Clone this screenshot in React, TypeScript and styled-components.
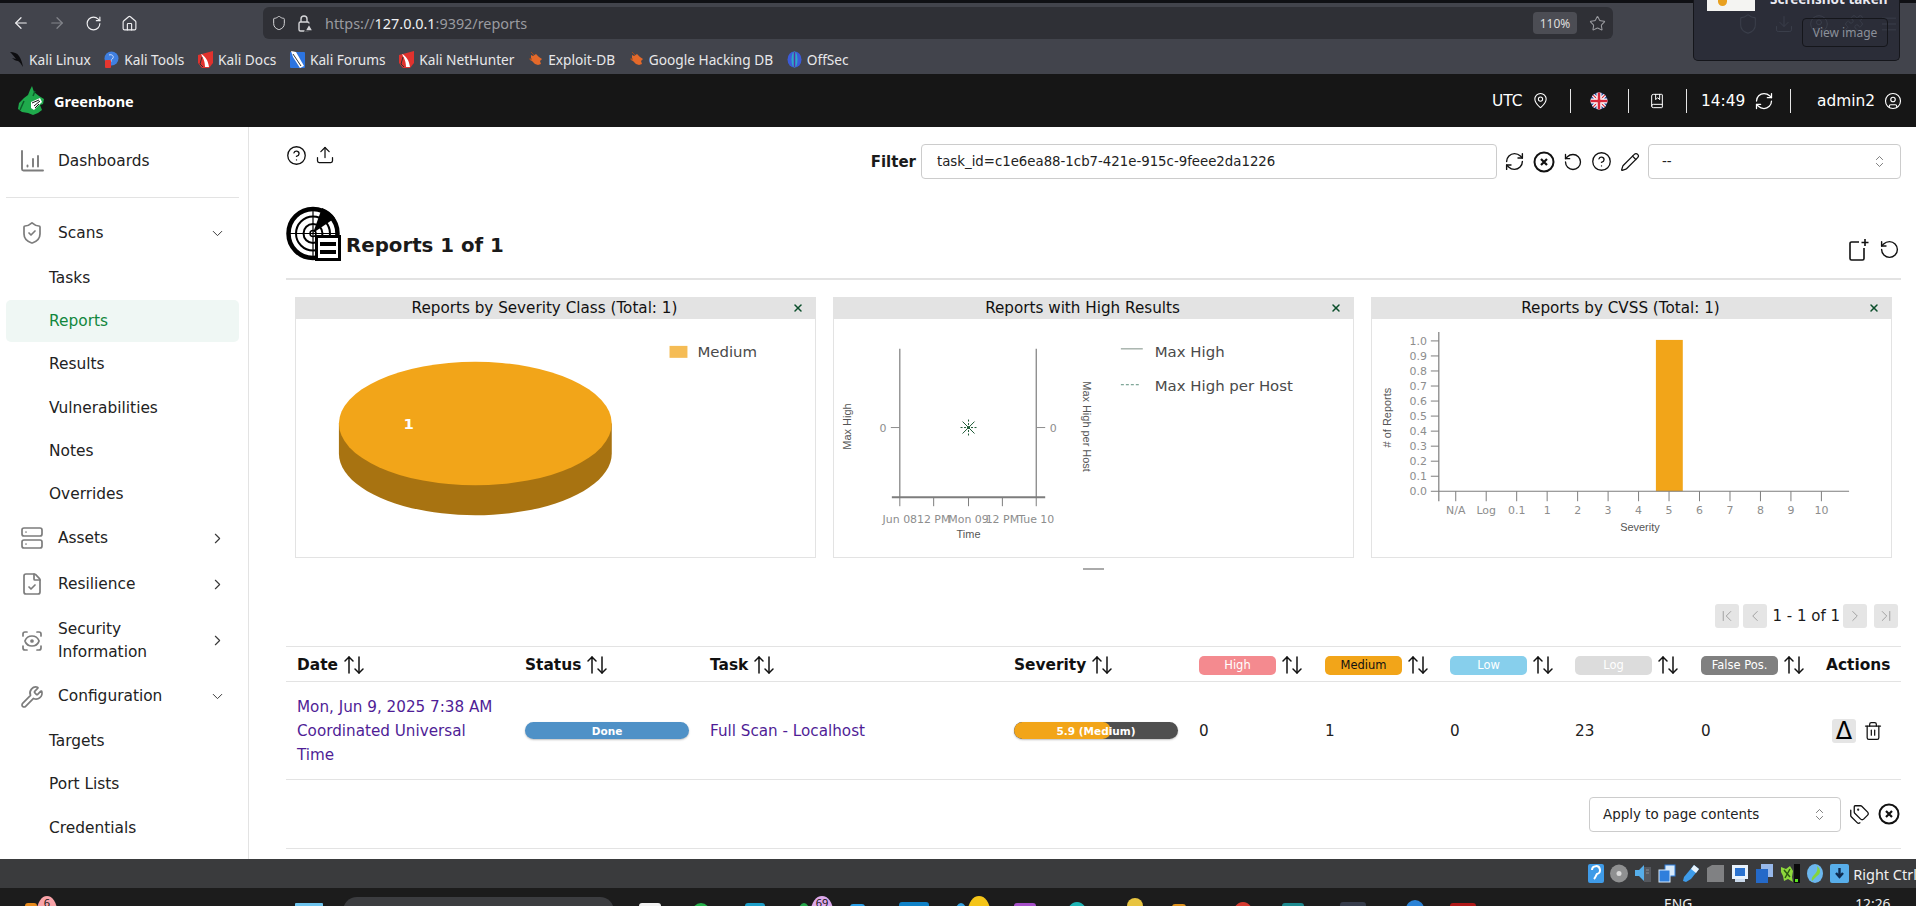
import React from "react";
import styled, { createGlobalStyle } from "styled-components";
import {
  ArrowLeft, ArrowRight, RotateCw, Home, Shield, Star, ChevronDown, ChevronRight, ShieldCheck, Server,
  FileCheck, ScanEye, Wrench, MapPin, RefreshCw, CircleUser, CircleHelp, Upload, RotateCcw, Pencil,
  ChevronsUpDown, ArrowUpDown, Trash2, Tags, X, ChevronLeft, ChevronFirst, ChevronLast, Download,
  Puzzle, Menu, BookMarked,
} from "lucide-react";

const Global = createGlobalStyle`
  html, body { margin: 0; padding: 0; height: 100%; overflow: hidden; background: #fff; }
  #root { height: 100%; }
  * { box-sizing: border-box; }
  body { font-family: "DejaVu Sans", sans-serif; color: #1a1a1a; }
`;

const Page = styled.div`
  position: relative; display: flex; flex-direction: column; height: 906px; width: 1916px; overflow: hidden;
`;
const TopStrip = styled.div`height: 3px; background: #0f1014; flex: none;`;
const Chrome = styled.div`
  flex: none; height: 71px; background: #42444c; color: #e8e8ea;
  font-family: "Noto Sans", sans-serif;
`;
const NavBar = styled.div`display: flex; align-items: center; height: 40px; padding: 4px 0 4px 12px;`;
const NavBtn = styled.span<{ $dim?: boolean }>`
  display: flex; justify-content: center; width: 18px; margin-right: 18px;
  color: ${(p) => (p.$dim ? "#83858b" : "#f0f0f2")};
`;
const UrlBar = styled.div`
  display: flex; align-items: center; margin-left: 107px; width: 1350px; height: 32px; border-radius: 6px;
  background: #2f3036; padding: 0 7px 0 8px; font-size: 14.4px; color: #9a9ba0;
`;
const UrlIcon = styled.span`display: flex; margin-right: 10px; color: #d5d5d8;`;
const UrlHost = styled.span`color: #f0f0f2;`;
const UrlText = styled.span`flex: 1; margin-left: 2px;`;
const Zoom = styled.span`
  display: flex; align-items: center; justify-content: center; width: 44px; height: 22px; border-radius: 4px;
  background: #4c4d54; color: #ddd; font-size: 12px; margin-right: 12px;
`;
const BookmarkBar = styled.div`display: flex; align-items: center; height: 31px; padding: 1px 0 0 9px; gap: 13.7px; font-size: 13.7px;`;
const Bookmark = styled.span`display: flex; align-items: center; gap: 5px; white-space: nowrap;`;

const Header = styled.header`
  flex: none; height: 53px; background: #161616; color: #fff; display: flex; align-items: center; padding: 0 11px 0 17px;
`;
const Brand = styled.div`
  display: flex; align-items: center; gap: 8px; font-family: "Noto Sans", sans-serif; font-weight: 700; font-size: 14.5px; flex: 1;
`;
const HeadGroup = styled.div<{ $w: number; $sep?: boolean; $pl: number; $pr: number }>`
  display: flex; align-items: center; justify-content: space-between; width: ${(p) => p.$w}px; height: 24px; font-size: 15.4px;
  padding: 0 ${(p) => p.$pr}px 0 ${(p) => p.$pl}px;
  border-left: ${(p) => (p.$sep ? "1px solid #e5e5e5" : "none")};
`;

const Main = styled.div`flex: 1; display: flex; min-height: 0; background: #fff;`;
const Sidebar = styled.nav`
  flex: none; width: 249px; border-right: 1px solid #e3e3e3; padding-top: 12px; overflow: hidden; font-size: 15.4px;
`;
const NavRow = styled.div<{ $h: number }>`
  display: flex; align-items: center; height: ${(p) => p.$h}px; padding: 0 22px 0 20px; color: #222;
`;
const NavIcon = styled.span`display: flex; width: 38px; flex: none; color: #7c7c7c;`;
const NavLabel = styled.span`flex: 1; line-height: 23px;`;
const NavChev = styled.span`display: flex; color: #3a3a3a;`;
const NavDivider = styled.div`height: 1px; background: #e3e3e3; margin: 14px 9px 13px 6px;`;
const SubList = styled.div`padding-top: 2px;`;
const SubRow = styled.div<{ $active?: boolean }>`
  display: flex; align-items: center; height: 42px; margin: 0 9px 1.2px 6px; padding-left: 43px; border-radius: 5px;
  color: ${(p) => (p.$active ? "#11873d" : "#222")};
  background: ${(p) => (p.$active ? "#eff7f4" : "transparent")};
`;

const Content = styled.main`flex: 1; min-width: 0; padding: 0 15px 0 37px; overflow: hidden;`;
const ToolRow = styled.div`display: flex; justify-content: space-between; padding-top: 17px; height: 52px;`;
const ToolIcons = styled.div`display: flex; gap: 8px; padding: 1px 0 0 0; height: 22px; color: #111;`;
const FilterGroup = styled.div`display: flex; align-items: center; height: 35px;`;
const FilterLabel = styled.span`font-weight: 700; font-size: 15px; margin-right: 5px;`;
const Field = styled.div<{ $w: number; $pl?: number; $fs?: number }>`
  display: flex; align-items: center; justify-content: space-between; width: ${(p) => p.$w}px; height: 35px;
  border: 1px solid #ccc; border-radius: 4px; padding: 0 13px 0 ${(p) => p.$pl ?? 13}px; font-size: ${(p) => p.$fs ?? 13.45}px;
  background: #fff; color: #222;
`;
const FilterIcons = styled.div`display: flex; align-items: center; gap: 8px; margin: 0 8px 0 7px; color: #111;`;
const TitleRow = styled.div`
  display: flex; align-items: flex-end; height: 102px; padding: 0 1px 17px 0; margin-top: -1px; border-bottom: 2px solid #e3e3e3;
`;
const TitleText = styled.h1`flex: 1; margin: 0 0 2px 5px; font-size: 19.8px; line-height: 26px; font-weight: 700; color: #1a1a1a;`;
const TitleActions = styled.div`display: flex; gap: 10px; color: #111;`;
const Charts = styled.div`display: grid; grid-template-columns: repeat(3, 521px); gap: 17px; padding: 17px 9px 0;`;
const Panel = styled.section`height: 261px; border: 1px solid #e3e3e3; display: flex; flex-direction: column;`;
const PanelHead = styled.div`
  position: relative; flex: none; height: 22px; margin: -1px -1px 0; padding-right: 22px; background: #e3e3e3; text-align: center;
  font-size: 15.2px; line-height: 23px; color: #111;
`;
const PanelClose = styled.span`
  position: absolute; right: 12px; top: 5px; display: flex; color: #0c4f2c;
`;
const ChartSvg = styled.svg`display: block; width: 519px; height: 239px;`;
const Axis = styled.text`font-family: "DejaVu Sans", sans-serif; font-size: 11px; fill: #8d8d8d;`;
const AxisName = styled.text`font-family: "Liberation Sans", sans-serif; font-size: 11px; fill: #555;`;
const Legend = styled.text`font-family: "DejaVu Sans", sans-serif; font-size: 15px; fill: #4a4a4a;`;
const PieLabel = styled.text`font-family: "DejaVu Sans", sans-serif; font-size: 15px; font-weight: 700; fill: #fff;`;
const Handle = styled.div`width: 21px; height: 2px; background: #aaa; margin: 10px auto 0;`;
const PagerRow = styled.div`display: flex; justify-content: flex-end; align-items: center; gap: 4px; margin-top: 34px; height: 24px; padding-right: 3px; font-size: 15px;`;
const PagerBtn = styled.span<{ $mx?: number }>`
  display: flex; align-items: center; justify-content: center; width: 24px; height: 24px; border-radius: 3px; background: #e5e5e5; color: #9a9a9a;
  margin-left: ${(p) => p.$mx ?? 0}px;
`;
const PagerText = styled.span`white-space: nowrap; margin: 0 -1px 0 1px;`;

const Table = styled.table`
  width: 100%; margin-top: 18px; border-collapse: collapse; table-layout: fixed; font-size: 15.2px;
`;
const Col = styled.col<{ $w?: number }>`width: ${(p) => (p.$w ? `${p.$w}px` : "auto")};`;
const Th = styled.th`
  height: 35px; padding: 2px 0 0 11px; text-align: left; font-weight: 700; font-size: 15.4px;
  border-top: 1px solid #e3e3e3; border-bottom: 1px solid #e3e3e3; color: #111;
`;
const ThInner = styled.span`display: inline-flex; align-items: center; gap: 4px; white-space: nowrap;`;
const Td = styled.td`
  height: 98px; padding: 0 11px; border-bottom: 1px solid #e3e3e3; line-height: 24px; color: #222; vertical-align: middle;
`;
const TaskLink = styled.a`color: #4f1d96; text-decoration: none;`;
const SevBadge = styled.span<{ $bg: string; $fg: string }>`
  display: flex; align-items: center; justify-content: center; width: 77px; height: 19px; border-radius: 5px;
  background: ${(p) => p.$bg}; color: ${(p) => p.$fg}; font-size: 11.5px; font-weight: 400;
`;
const Bar = styled.div<{ $bg: string }>`
  position: relative; width: 164px; height: 17px; border-radius: 9px; overflow: hidden; background: ${(p) => p.$bg};
  box-shadow: 0 1px 2px rgba(0,0,0,.25);
`;
const BarFill = styled.div<{ $bg: string }>`height: 100%; background: ${(p) => p.$bg}; border-radius: 9px;`;
const BarText = styled.span`
  position: absolute; inset: 0; display: flex; align-items: center; justify-content: center;
  color: #fff; font-size: 10.5px; font-weight: 700;
`;
const ActionCell = styled.div`display: flex; align-items: center; gap: 7px; padding-left: 6px; color: #111;`;
const DeltaBtn = styled.span`
  display: flex; align-items: center; justify-content: center; width: 24px; height: 24px; border-radius: 3px; background: #e5e5e5;
  font-size: 24px; line-height: 1; color: #000;
`;
const BulkRow = styled.div`
  display: flex; justify-content: flex-end; align-items: center; gap: 8px; height: 69px; border-bottom: 1px solid #e3e3e3; padding-right: 1px; color: #111;
`;

const StatusBar = styled.div`
  flex: none; height: 29px; background: #3a3b3d; display: flex; align-items: center; justify-content: flex-end; gap: 6px;
  font-family: "Noto Sans", sans-serif; font-size: 14.5px; color: #f0f0f0; white-space: nowrap;
`;
const TrayText = styled.span`margin: 0 -1px 0 -2px;`;
const Taskbar = styled.div`
  flex: none; height: 18px; background: #1c1c1c; display: flex; overflow: hidden; font-family: "Noto Sans", sans-serif;
`;
const TaskItem = styled.span<{ $gap: number; $w: number; $top: number; $c: string; $r?: string }>`
  flex: none; display: block; width: ${(p) => p.$w}px; height: 30px; margin: ${(p) => p.$top}px 0 0 ${(p) => p.$gap}px;
  background: ${(p) => p.$c}; border-radius: ${(p) => p.$r ?? "3px"};
  text-align: center; color: #111; font-size: 11px; line-height: 14px;
`;
const TaskText = styled.span<{ $gap: number; $top: number }>`
  flex: none; margin: ${(p) => p.$top}px 0 0 ${(p) => p.$gap}px; color: #eee; font-size: 13.8px; line-height: 14px;
`;

const Toast = styled.div`
  position: absolute; left: 1693px; top: 0; width: 207px; height: 61px; background: #2b2d38; border: 1px solid #15161b;
  border-top: 0; border-radius: 0 0 5px 5px; color: #e8e8f0; font-family: "Noto Sans", sans-serif; overflow: hidden;
`;
const ToastThumb = styled.div`
  position: absolute; left: 13px; top: 0; width: 48px; height: 11px; background: #f4f4f2;
`;
const ToastDot = styled.div`position: absolute; left: 11px; top: 0; width: 9px; height: 6px; border-radius: 0 0 5px 5px; background: #e8a020;`;
const ToastTitle = styled.div`
  position: absolute; left: 76px; top: -10px; font-weight: 700; font-size: 13.5px; line-height: 18px; white-space: nowrap;
`;
const ToastGhosts = styled.div`
  position: absolute; left: 43px; top: 13px; display: flex; align-items: center; gap: 15px; color: #3a3e4a;
`;
const ToastBtn = styled.div`
  position: absolute; left: 108px; top: 18px; width: 86px; height: 29px; border: 1px solid #15161b; border-radius: 4px;
  display: flex; align-items: center; justify-content: center; font-size: 12px; color: #8b909a;
`;

const sw = 1.6;

const Logo = () => (
  <svg width="29" height="30" viewBox="0 0 29 30">
    <path d="M15 0l2 6 5 4 5 3-1 5-3 1 2 5-4 3-5 2-5-2-6-1-4-3 1-6 5-5 4-3 2-5z" fill="#1faa4c" />
    <path d="M14 16l9-4 2 4-8 8-3-2z" fill="#fff" />
    <path d="M15 17l7-3M17 20l6-5M18 22l4-4" stroke="#111" strokeWidth="1" />
    <path d="M3 24l4-9M18 5l-2 5" stroke="#0c5f2a" strokeWidth="1.5" fill="none" />
  </svg>
);

const Flag = () => (
  <svg width="18" height="18" viewBox="0 0 18 18">
    <defs><clipPath id="fc"><circle cx="9" cy="9" r="8.5" /></clipPath></defs>
    <g clipPath="url(#fc)">
      <rect width="18" height="18" fill="#2a4a9c" />
      <path d="M0 0l18 18M18 0L0 18" stroke="#fff" strokeWidth="3.4" />
      <path d="M0 0l18 18M18 0L0 18" stroke="#d8283c" strokeWidth="1.2" />
      <path d="M9 0v18M0 9h18" stroke="#fff" strokeWidth="5" />
      <path d="M9 0v18M0 9h18" stroke="#d8283c" strokeWidth="2.6" />
    </g>
  </svg>
);

const Fav = ({ kind }: { kind: string }) => {
  if (kind === "dragon")
    return <svg width="15" height="17" viewBox="0 0 15 17"><path d="M1 1c4 0 7 1 9 4 2 3 3 6 4 11-2-3-3-5-5-6-2 0-4-1-6-3l4 1C5 5 3 3 1 1z" fill="#0d0d10" /></svg>;
  if (kind === "tools")
    return <svg width="15" height="17" viewBox="0 0 15 17"><circle cx="7.5" cy="7.5" r="7" fill="#3f7fe0" /><path d="M5 4c3-1 5 1 4 3-1 2-3 2-2 4" stroke="#cfe0ff" fill="none" /><rect x="1" y="9" width="6" height="8" rx="1" fill="#e5362f" /></svg>;
  if (kind === "docs")
    return <svg width="15" height="17" viewBox="0 0 15 17"><path d="M0 4l15-4v12l-4 5H4L0 12z" fill="#e0322e" /><path d="M3 3c4 2 7 6 8 13H7C7 10 5 7 3 3z" fill="#fff" /><path d="M4 6l-2 7 3 3" stroke="#333" fill="none" /></svg>;
  if (kind === "forums")
    return <svg width="15" height="17" viewBox="0 0 15 17"><rect y="1" width="15" height="16" rx="1" fill="#2c74e0" /><path d="M1 0l5 1 8 14-4 2L3 6z" fill="#fff" /><path d="M3 3l8 12" stroke="#333" /></svg>;
  if (kind === "bug")
    return <svg width="15" height="16" viewBox="0 0 15 16"><path d="M3 4l2 1 3-2 3 3 3 2-2 2 1 3-3 1-3-1-3-3-2-1 1-2z" fill="#e4692a" /><path d="M3 1l3 3M1 8l3 0" stroke="#9c4a1e" /></svg>;
  return <svg width="15" height="17" viewBox="0 0 15 17"><ellipse cx="7.5" cy="8.5" rx="7" ry="8" fill="#3b5bd8" /><ellipse cx="7.5" cy="8.5" rx="3" ry="8" fill="#2ca9c9" /><path d="M7.5 1v15" stroke="#5b2ea6" strokeWidth="1.5" /></svg>;
};

const Radar = () => (
  <svg width="55" height="55" viewBox="0 0 55 55">
    <path d="M27 27L36 2a26 26 0 0 1 13 10z" fill="#000" />
    <circle cx="27" cy="27.5" r="24.5" fill="none" stroke="#000" strokeWidth="4.5" />
    <circle cx="27" cy="27.5" r="17" fill="none" stroke="#000" strokeWidth="2" />
    <circle cx="27" cy="27.5" r="9.5" fill="none" stroke="#000" strokeWidth="2" />
    <circle cx="27" cy="27.5" r="3" fill="none" stroke="#000" strokeWidth="1.5" />
    <path d="M27 3v48M3 27.5h48" stroke="#000" strokeWidth="1.2" />
    <path d="M31 29h24v26H29z" fill="#fff" />
    <rect x="30.5" y="30.5" width="23" height="23" fill="#fff" stroke="#000" strokeWidth="3" />
    <rect x="34" y="36" width="16" height="4" fill="#000" />
    <rect x="34" y="44" width="16" height="4" fill="#000" />
  </svg>
);

const NewDoc = () => (
  <svg width="21" height="22" viewBox="0 0 21 22" fill="none" stroke="#111" strokeWidth="1.6">
    <path d="M11 3H3.5A1.5 1.5 0 0 0 2 4.5v15A1.5 1.5 0 0 0 3.5 21h11a1.5 1.5 0 0 0 1.5-1.5V9" />
    <path d="M17 0v7M13.5 3.5h7" />
  </svg>
);

const DashIcon = () => (
  <svg width="25" height="24" viewBox="0 0 25 24" fill="none" stroke="currentColor" strokeWidth="1.9" strokeLinecap="round">
    <path d="M2 2v18a1.5 1.5 0 0 0 1.5 1.5H23" />
    <path d="M7.5 16.5v1M13 10v7.5M18 7v10.5" />
  </svg>
);

const CloseCircle = ({ size = 22 }: { size?: number }) => (
  <svg width={size} height={size} viewBox="0 0 22 22" fill="none" stroke="#111" strokeWidth="2">
    <circle cx="11" cy="11" r="9.5" />
    <path d="M8 8l6 6M14 8l-6 6" strokeWidth="2.2" />
  </svg>
);

const PieChart = () => (
  <ChartSvg viewBox="0 0 519 239">
    <path d="M42 105v30c0 34 61 62 137 62s137-28 137-62v-30z" fill="#a87311" />
    <ellipse cx="179" cy="105" rx="137" ry="62" fill="#f2a519" />
    <PieLabel x="112" y="110" textAnchor="middle">1</PieLabel>
    <rect x="374" y="27" width="18" height="12" fill="#f5bc55" />
    <Legend x="402" y="38">Medium</Legend>
  </ChartSvg>
);

const LineChart = () => {
  const xs = [65, 99, 134, 168, 202];
  const labels = ["Jun 08", "12 PM", "Mon 09", "12 PM", "Tue 10"];
  return (
    <ChartSvg viewBox="0 0 519 239">
      <path d="M65 30v149M202 30v149" stroke="#7d7d7d" strokeWidth="1.2" />
      <path d="M57 179h154" stroke="#7d7d7d" strokeWidth="2" />
      {xs.map((x) => <path key={x} d={`M${x} 179v9`} stroke="#7d7d7d" />)}
      {xs.map((x, i) => <Axis key={i} x={x} y={205} textAnchor="middle">{labels[i]}</Axis>)}
      <path d="M56 109h9M202 109h9" stroke="#8d8d8d" />
      <Axis x={48} y={113} textAnchor="middle">0</Axis>
      <Axis x={219} y={113} textAnchor="middle">0</Axis>
      <AxisName x={134} y={220} textAnchor="middle">Time</AxisName>
      <AxisName transform="translate(16 108) rotate(-90)" textAnchor="middle">Max High</AxisName>
      <AxisName transform="translate(249 108) rotate(90)" textAnchor="middle">Max High per Host</AxisName>
      <path d="M128 103l12 12M140 103l-12 12" stroke="#1d5a35" />
      <path d="M134 101v16M126 109h16" stroke="#1d5a35" strokeDasharray="2 1.5" />
      <circle cx="134" cy="109" r="1.4" fill="#1d5a35" />
      <path d="M287 30h22" stroke="#7d8f85" />
      <path d="M287 66h20" stroke="#5d8f7c" strokeDasharray="3 2" />
      <Legend x="321" y="38">Max High</Legend>
      <Legend x="321" y="72">Max High per Host</Legend>
    </ChartSvg>
  );
};

const BarChart = () => {
  const ys = ["1.0", "0.9", "0.8", "0.7", "0.6", "0.5", "0.4", "0.3", "0.2", "0.1", "0.0"];
  const xl = ["N/A", "Log", "0.1", "1", "2", "3", "4", "5", "6", "7", "8", "9", "10"];
  return (
    <ChartSvg viewBox="0 0 519 239">
      <rect x="284" y="21" width="27" height="152" fill="#f2a519" />
      <path d="M66 13v170M66 173h412" stroke="#7d7d7d" strokeWidth="1.2" />
      {ys.map((t, i) => (
        <g key={t}>
          <path d={`M58 ${22 + i * 15.1}h8`} stroke="#7d7d7d" />
          <Axis x={54} y={26 + i * 15.1} textAnchor="end">{t}</Axis>
        </g>
      ))}
      {xl.map((t, i) => (
        <g key={t}>
          <path d={`M${83 + i * 30.6} 173v10`} stroke="#7d7d7d" />
          <Axis x={83 + i * 30.6} y={196} textAnchor="middle">{t}</Axis>
        </g>
      ))}
      <AxisName x={268} y={213} textAnchor="middle">Severity</AxisName>
      <AxisName transform="translate(18 99) rotate(-90)" textAnchor="middle">{"# of Reports"}</AxisName>
    </ChartSvg>
  );
};

const Sort = () => <ArrowUpDown size={24} strokeWidth={1.5} />;

const Tray = ({ w, children }: { w: number; children: React.ReactNode }) => (
  <svg width={w} height="19" viewBox={`0 0 ${w} 19`}>{children}</svg>
);

const TrayIcons = () => (
  <>
    <Tray w={16}><rect width="16" height="19" rx="2" fill="#3f9be8" /><path d="M4 6a4 4 0 1 1 5 4c-1 1-1 3-3 5" stroke="#fff" strokeWidth="2" fill="none" /></Tray>
    <Tray w={18}><circle cx="9" cy="9.5" r="9" fill="#8f9091" /><circle cx="9" cy="9.5" r="2.5" fill="#d9d9d9" /></Tray>
    <Tray w={18}><path d="M1 6h4l5-5v16l-5-5H1z" fill="#56aeea" /><rect x="10" y="3" width="7" height="15" fill="#55585e" /><path d="M12 6h3M12 9h3" stroke="#8a8d92" /></Tray>
    <Tray w={18}><rect x="7" y="1" width="10" height="11" fill="#d8eafb" stroke="#2f7fdc" /><rect x="1" y="6" width="11" height="12" fill="#2f7fdc" stroke="#d8eafb" /></Tray>
    <Tray w={18}><path d="M12 1l5 4-8 10-5 3-3-1 1-4z" fill="#3e9cea" /><path d="M12 1l5 4-3 4-5-4z" fill="#e9f3fb" /></Tray>
    <Tray w={19}><path d="M1 4l5-3h12v17H1z" fill="#808183" /></Tray>
    <Tray w={18}><rect x="1" y="1" width="16" height="14" fill="#e8f2fc" /><rect x="4" y="4" width="10" height="8" fill="#2a72cf" /><rect x="4" y="15" width="10" height="3" fill="#c9d8ea" /></Tray>
    <Tray w={18}><rect x="6" y="0" width="12" height="13" fill="#97b8ea" /><rect x="1" y="5" width="12" height="14" fill="#2469c8" /></Tray>
    <Tray w={21}><rect x="15" width="6" height="19" fill="#0a0a0a" /><rect x="16" y="15" width="3" height="3" fill="#58e020" /><path d="M2 3l5 2 4-3 3 5-1 6 1 5-5-3-4 2-1-5-2-4z" fill="#8ed83c" /><path d="M5 6l6 7M11 5l-5 9" stroke="#2c5a12" strokeWidth="1.5" /></Tray>
    <Tray w={18}><ellipse cx="9" cy="9.5" rx="8" ry="9.5" fill="#6cb7ee" /><path d="M11 2c4 3 4 8 0 10l-5 5c-1-3 1-5 3-7s3-5 2-8z" fill="#85d53c" /></Tray>
    <Tray w={19}><rect width="19" height="19" rx="2" fill="#58aeea" /><path d="M9.5 4v8M6 9l3.5 4L13 9" stroke="#0f2c50" strokeWidth="2.4" fill="none" /></Tray>
  </>
);

const task: { gap: number; w: number; top: number; c: string; r?: string; t?: string }[] = [
  { gap: 25, w: 12, top: 15, c: "#e88a1c" }, { gap: 0, w: 20, top: 8, c: "#f8a3a8", r: "50%", t: "6" },
  { gap: 238, w: 28, top: 15, c: "#6ec4ee", r: "1px" }, { gap: 20, w: 271, top: 9, c: "#3c3d40", r: "14px" },
  { gap: 25, w: 22, top: 15, c: "#f2f2f2" }, { gap: 29, w: 22, top: 15, c: "#27b34b", r: "50%" },
  { gap: 33, w: 20, top: 15, c: "#1d9fc9" }, { gap: 32, w: 14, top: 15, c: "#25a84a", r: "50%" },
  { gap: 0, w: 22, top: 8, c: "#dca8ea", r: "50%", t: "69" }, { gap: 17, w: 15, top: 16, c: "#2a9fe8" },
  { gap: 34, w: 30, top: 14, c: "#0f82c8" }, { gap: 25, w: 14, top: 15, c: "#33a1e0", r: "50%" },
  { gap: 0, w: 22, top: 8, c: "#f5c518", r: "50%" }, { gap: 24, w: 22, top: 15, c: "#a64fc9" },
  { gap: 30, w: 22, top: 14, c: "#1eb5b5", r: "50%" }, { gap: 39, w: 16, top: 10, c: "#e8c440", r: "8px 8px 0 0" },
  { gap: 29, w: 14, top: 16, c: "#e0921c" }, { gap: 46, w: 22, top: 14, c: "#d63a2f", r: "50%" },
  { gap: 28, w: 22, top: 15, c: "#1d8a8f" }, { gap: 36, w: 26, top: 14, c: "#373d4c" },
  { gap: 40, w: 18, top: 12, c: "#2a82d6", r: "9px 9px 0 0" }, { gap: 26, w: 26, top: 15, c: "#b01818" },
];

const groups = ["Tasks", "Reports", "Results", "Vulnerabilities", "Notes", "Overrides"];

export default function App() {
  return (
    <Page>
      <Global />
      <TopStrip />
      <Chrome>
        <NavBar>
          <NavBtn><ArrowLeft size={18} strokeWidth={sw} /></NavBtn>
          <NavBtn $dim><ArrowRight size={18} strokeWidth={sw} /></NavBtn>
          <NavBtn><RotateCw size={17} strokeWidth={sw} /></NavBtn>
          <NavBtn><Home size={17} strokeWidth={sw} /></NavBtn>
          <UrlBar>
            <UrlIcon><Shield size={16} strokeWidth={1.5} /></UrlIcon>
            <UrlIcon>
              <svg width="16" height="18" viewBox="0 0 16 18" fill="none" stroke="currentColor" strokeWidth="1.4">
                <rect x="2" y="8" width="10" height="9" rx="1.5" />
                <path d="M4 8V5a3 3 0 0 1 6 0v3" />
                <path d="M12 10l4 7H8z" fill="#d5d5d8" stroke="#2f3036" />
              </svg>
            </UrlIcon>
            <UrlText>https://<UrlHost>127.0.0.1</UrlHost>:9392/reports</UrlText>
            <Zoom>110%</Zoom>
            <Star size={17} strokeWidth={1.5} />
          </UrlBar>
        </NavBar>
        <BookmarkBar>
          <Bookmark><Fav kind="dragon" />Kali Linux</Bookmark>
          <Bookmark><Fav kind="tools" />Kali Tools</Bookmark>
          <Bookmark><Fav kind="docs" />Kali Docs</Bookmark>
          <Bookmark><Fav kind="forums" />Kali Forums</Bookmark>
          <Bookmark><Fav kind="docs" />Kali NetHunter</Bookmark>
          <Bookmark><Fav kind="bug" />Exploit-DB</Bookmark>
          <Bookmark><Fav kind="bug" />Google Hacking DB</Bookmark>
          <Bookmark><Fav kind="off" />OffSec</Bookmark>
        </BookmarkBar>
      </Chrome>
      <Header>
        <Brand><Logo />Greenbone</Brand>
        <HeadGroup $w={92} $pl={14} $pr={21}>UTC <MapPin size={17} strokeWidth={1.5} /></HeadGroup>
        <HeadGroup $w={58} $pl={19} $pr={0} $sep><Flag /></HeadGroup>
        <HeadGroup $w={58} $pl={20} $pr={0} $sep><BookMarked size={16} strokeWidth={1.5} /></HeadGroup>
        <HeadGroup $w={104} $pl={14} $pr={16} $sep>14:49 <RefreshCw size={20} strokeWidth={1.5} /></HeadGroup>
        <HeadGroup $w={115} $pl={26} $pr={3} $sep>admin2 <CircleUser size={18} strokeWidth={1.5} /></HeadGroup>
      </Header>
      <Main>
        <Sidebar>
          <NavRow $h={44}><NavIcon><DashIcon /></NavIcon><NavLabel>Dashboards</NavLabel></NavRow>
          <NavDivider />
          <NavRow $h={44}><NavIcon><ShieldCheck size={24} strokeWidth={1.7} /></NavIcon><NavLabel>Scans</NavLabel><NavChev><ChevronDown size={17} strokeWidth={1.4} /></NavChev></NavRow>
          <SubList>{groups.map((g) => <SubRow key={g} $active={g === "Reports"}>{g}</SubRow>)}</SubList>
          <NavRow $h={44}><NavIcon><Server size={24} strokeWidth={1.7} /></NavIcon><NavLabel>Assets</NavLabel><NavChev><ChevronRight size={17} strokeWidth={1.6} /></NavChev></NavRow>
          <NavRow $h={48}><NavIcon><FileCheck size={24} strokeWidth={1.7} /></NavIcon><NavLabel>Resilience</NavLabel><NavChev><ChevronRight size={17} strokeWidth={1.6} /></NavChev></NavRow>
          <NavRow $h={65}><NavIcon><ScanEye size={24} strokeWidth={1.7} /></NavIcon><NavLabel>Security Information</NavLabel><NavChev><ChevronRight size={17} strokeWidth={1.6} /></NavChev></NavRow>
          <NavRow $h={47}><NavIcon><Wrench size={24} strokeWidth={1.7} /></NavIcon><NavLabel>Configuration</NavLabel><NavChev><ChevronDown size={17} strokeWidth={1.4} /></NavChev></NavRow>
          {["Targets", "Port Lists", "Credentials"].map((g) => <SubRow key={g}>{g}</SubRow>)}
        </Sidebar>
        <Content>
          <ToolRow>
            <ToolIcons>
              <CircleHelp size={21} strokeWidth={1.5} />
              <Upload size={20} strokeWidth={1.5} />
            </ToolIcons>
            <FilterGroup>
              <FilterLabel>Filter</FilterLabel>
              <Field $w={576} $pl={15} $fs={13.3}>task_id=c1e6ea88-1cb7-421e-915c-9feee2da1226</Field>
              <FilterIcons>
                <RefreshCw size={21} strokeWidth={1.6} />
                <CloseCircle />
                <RotateCcw size={20} strokeWidth={1.6} />
                <CircleHelp size={21} strokeWidth={1.5} />
                <Pencil size={20} strokeWidth={1.5} />
              </FilterIcons>
              <Field $w={253}>--<ChevronsUpDown size={15} strokeWidth={1.2} color="#555" /></Field>
            </FilterGroup>
          </ToolRow>
          <TitleRow>
            <Radar />
            <TitleText>Reports 1 of 1</TitleText>
            <TitleActions><NewDoc /><RotateCcw size={21} strokeWidth={1.6} /></TitleActions>
          </TitleRow>
          <Charts>
            <Panel><PanelHead>Reports by Severity Class (Total: 1)<PanelClose><X size={12} strokeWidth={3} /></PanelClose></PanelHead><PieChart /></Panel>
            <Panel><PanelHead>Reports with High Results<PanelClose><X size={12} strokeWidth={3} /></PanelClose></PanelHead><LineChart /></Panel>
            <Panel><PanelHead>Reports by CVSS (Total: 1)<PanelClose><X size={12} strokeWidth={3} /></PanelClose></PanelHead><BarChart /></Panel>
          </Charts>
          <Handle />
          <PagerRow>
            <PagerBtn><ChevronFirst size={18} strokeWidth={1.2} /></PagerBtn>
            <PagerBtn><ChevronLeft size={18} strokeWidth={1.2} /></PagerBtn>
            <PagerText>1 - 1 of 1</PagerText>
            <PagerBtn><ChevronRight size={18} strokeWidth={1.2} /></PagerBtn>
            <PagerBtn $mx={3}><ChevronLast size={18} strokeWidth={1.2} /></PagerBtn>
          </PagerRow>
          <Table>
            <colgroup>
              <Col $w={228} /><Col $w={185} /><Col $w={304} /><Col $w={185} />
              <Col $w={126} /><Col $w={125} /><Col $w={125} /><Col $w={126} /><Col $w={125} /><Col />
            </colgroup>
            <thead>
              <tr>
                <Th><ThInner>Date <Sort /></ThInner></Th>
                <Th><ThInner>Status <Sort /></ThInner></Th>
                <Th><ThInner>Task <Sort /></ThInner></Th>
                <Th><ThInner>Severity <Sort /></ThInner></Th>
                <Th><ThInner><SevBadge $bg="#f48a8f" $fg="#fff">High</SevBadge><Sort /></ThInner></Th>
                <Th><ThInner><SevBadge $bg="#f2a519" $fg="#111">Medium</SevBadge><Sort /></ThInner></Th>
                <Th><ThInner><SevBadge $bg="#87cfec" $fg="#fff">Low</SevBadge><Sort /></ThInner></Th>
                <Th><ThInner><SevBadge $bg="#dcdcdc" $fg="#fff">Log</SevBadge><Sort /></ThInner></Th>
                <Th><ThInner><SevBadge $bg="#808080" $fg="#fff">False Pos.</SevBadge><Sort /></ThInner></Th>
                <Th>Actions</Th>
              </tr>
            </thead>
            <tbody>
              <tr>
                <Td><TaskLink href="#">Mon, Jun 9, 2025 7:38 AM Coordinated Universal Time</TaskLink></Td>
                <Td><Bar $bg="#4f91c7"><BarText>Done</BarText></Bar></Td>
                <Td><TaskLink href="#">Full Scan - Localhost</TaskLink></Td>
                <Td><Bar $bg="#4f4f4f"><BarFill $bg="#f2a519" style={{ width: `${5.9 * 10}%` }} /><BarText>5.9 (Medium)</BarText></Bar></Td>
                <Td>0</Td><Td>1</Td><Td>0</Td><Td>23</Td><Td>0</Td>
                <Td><ActionCell><DeltaBtn>Δ</DeltaBtn><Trash2 size={20} strokeWidth={1.5} /></ActionCell></Td>
              </tr>
            </tbody>
          </Table>
          <BulkRow>
            <Field $w={252}>Apply to page contents<ChevronsUpDown size={15} strokeWidth={1.2} color="#555" /></Field>
            <Tags size={21} strokeWidth={1.5} />
            <CloseCircle />
          </BulkRow>
        </Content>
      </Main>
      <StatusBar>
        <TrayIcons />
        <TrayText>Right Ctrl</TrayText>
      </StatusBar>
      <Taskbar>
        {task.map((t, i) => <TaskItem key={i} $gap={t.gap} $w={t.w} $top={t.top} $c={t.c} $r={t.r}>{t.t}</TaskItem>)}
        <TaskText $gap={188} $top={9}>ENG</TaskText>
        <TaskText $gap={163} $top={9}>12:26</TaskText>
      </Taskbar>
      <Toast>
        <ToastGhosts>
          <Shield size={22} strokeWidth={1.2} />
          <Download size={20} strokeWidth={1.2} />
          <CircleUser size={20} strokeWidth={1.2} />
          <Puzzle size={20} strokeWidth={1.2} />
          <Menu size={20} strokeWidth={1.2} />
        </ToastGhosts>
        <ToastThumb><ToastDot /></ToastThumb>
        <ToastTitle>Screenshot taken</ToastTitle>
        <ToastBtn>View image</ToastBtn>
      </Toast>
    </Page>
  );
}
